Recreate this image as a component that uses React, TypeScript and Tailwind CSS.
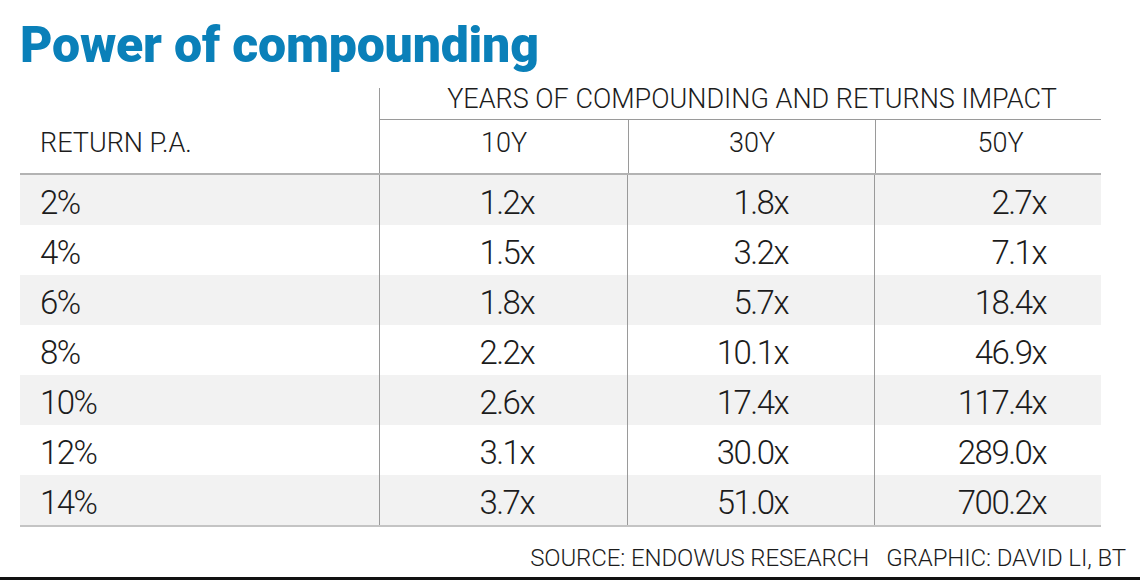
import React from "react";

const rows = [
  ["2%", "1.2x", "1.8x", "2.7x"],
  ["4%", "1.5x", "3.2x", "7.1x"],
  ["6%", "1.8x", "5.7x", "18.4x"],
  ["8%", "2.2x", "10.1x", "46.9x"],
  ["10%", "2.6x", "17.4x", "117.4x"],
  ["12%", "3.1x", "30.0x", "289.0x"],
  ["14%", "3.7x", "51.0x", "700.2x"],
];

export default function App() {
  return (
    <div className="w-[1140px] h-[580px] bg-white flex flex-col font-['Roboto','Liberation_Sans',Arial,sans-serif] text-[#1c1c1c]">
      <h1 className="pl-[20px] pt-[20px] text-[50px] leading-[50px] font-black tracking-[-0.2px] text-[#0a80b9]">
        Power of compounding
      </h1>

      <div className="mt-[18px] ml-[20px] w-[1081px]">
        {/* header */}
        <div className="grid grid-cols-[359px_722px] border-b-2 border-[#b3b3b3]">
          <div className="flex flex-col justify-end">
            <div className="h-[53px] flex items-center pl-[20px] pb-[6px] text-[27px] leading-[27px] font-light">
              RETURN P.A.
            </div>
          </div>
          <div className="border-l border-[#9a9a9a]">
            <div className="h-[32px] border-b border-[#9a9a9a] pl-[23px] text-center text-[27px] leading-[22px] font-light">
              YEARS OF COMPOUNDING AND RETURNS IMPACT
            </div>
            <div className="grid grid-cols-[248px_247px_227px] h-[53px] text-[27px] leading-[27px] font-light">
              <div className="flex items-center justify-center pb-[6px]">10Y</div>
              <div className="flex items-center justify-center pb-[6px] border-l border-[#9a9a9a]">30Y</div>
              <div className="flex items-center justify-center pb-[6px] pl-[23px] border-l border-[#9a9a9a]">50Y</div>
            </div>
          </div>
        </div>

        {/* body */}
        <div className="border-b-2 border-[#c4c4c4]">
          {rows.map((r, i) => (
            <div
              key={r[0]}
              className={
                "grid grid-cols-[359px_248px_247px_227px] h-[50px] text-[33px] leading-[33px] tracking-[-1.5px] font-light " +
                (i % 2 === 0 ? "bg-[#f2f2f2]" : "bg-white")
              }
            >
              <div className="flex items-center pl-[20px] pt-[4px]">{r[0]}</div>
              <div className="flex items-center justify-end pr-[93px] pt-[4px] border-l border-[#9a9a9a]">{r[1]}</div>
              <div className="flex items-center justify-end pr-[86px] pt-[4px] border-l border-[#9a9a9a]">{r[2]}</div>
              <div className="flex items-center justify-end pr-[55px] pt-[4px] border-l border-[#9a9a9a]">{r[3]}</div>
            </div>
          ))}
        </div>
      </div>

      <div className="flex-1 flex items-center justify-end pr-[14px] pt-[12px] text-[24px] leading-[24px] tracking-[-0.1px] font-light whitespace-pre">
        SOURCE: ENDOWUS RESEARCH   GRAPHIC: DAVID LI, BT
      </div>
      <div className="h-[3px] bg-[#111]" />
    </div>
  );
}
